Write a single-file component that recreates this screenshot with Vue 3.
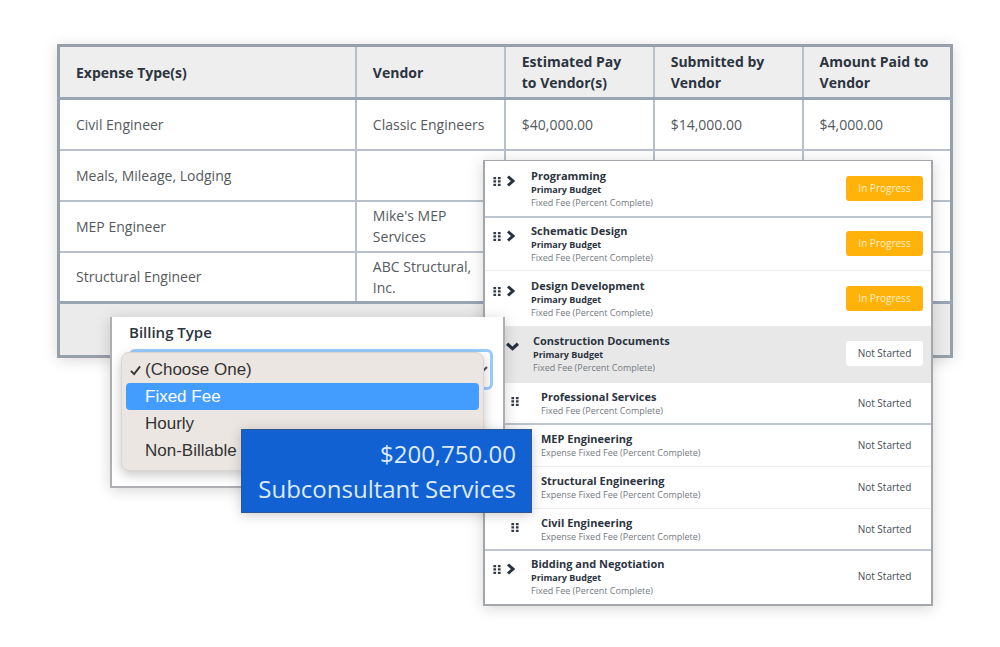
<script setup>
import { ref } from 'vue'

const headings = ['Expense Type(s)', 'Vendor', 'Estimated Pay to Vendor(s)', 'Submitted by Vendor', 'Amount Paid to Vendor']
const expenses = [
  ['Civil Engineer', 'Classic Engineers', '$40,000.00', '$14,000.00', '$4,000.00'],
  ['Meals, Mileage, Lodging', '', '', '', ''],
  ['MEP Engineer', "Mike's MEP Services", '', '', ''],
  ['Structural Engineer', 'ABC Structural, Inc.', '', '', ''],
]

const fixed = 'Fixed Fee (Percent Complete)'
const expense = 'Expense Fixed Fee (Percent Complete)'
const phases = [
  { name: 'Programming', budget: true, fee: fixed, status: 'In Progress', line: 'line' },
  { name: 'Schematic Design', budget: true, fee: fixed, status: 'In Progress', line: 'faint' },
  { name: 'Design Development', budget: true, fee: fixed, status: 'In Progress', line: 'none' },
  { name: 'Construction Documents', budget: true, open: true, fee: fixed, status: 'Not Started', line: 'none' },
  { name: 'Professional Services', fee: fixed, status: 'Not Started', line: 'line' },
  { name: 'MEP Engineering', fee: expense, status: 'Not Started', line: 'faint' },
  { name: 'Structural Engineering', fee: expense, status: 'Not Started', line: 'faint' },
  { name: 'Civil Engineering', fee: expense, status: 'Not Started', line: 'line' },
  { name: 'Bidding and Negotiation', budget: true, fee: fixed, status: 'Not Started', line: 'none' },
]

const billingTypes = ['(Choose One)', 'Fixed Fee', 'Hourly', 'Non-Billable']
const selected = ref('(Choose One)')
const active = ref('Fixed Fee')
</script>

<template>
  <main class="stage">
    <table class="expenses">
      <thead>
        <tr>
          <th v-for="h in headings" :key="h" scope="col">{{ h }}</th>
        </tr>
      </thead>
      <tbody>
        <tr v-for="row in expenses" :key="row[0]">
          <td v-for="(cell, i) in row" :key="i">{{ cell }}</td>
        </tr>
      </tbody>
      <tfoot>
        <tr><td colspan="5"></td></tr>
      </tfoot>
    </table>

    <ul class="phases">
      <li
        v-for="p in phases"
        :key="p.name"
        class="phase"
        :class="[p.line, { child: !p.budget, open: p.open }]"
      >
        <div class="tools">
          <svg v-if="!p.open" class="grip" viewBox="0 0 8 10" aria-hidden="true">
            <path d="M0 0h3v2.500H0zM5 0h3v2.500H5zM0 3.700h3v2.500H0zM5 3.700h3v2.500H5zM0 7.500h3V10H0zM5 7.500h3V10H5z" />
          </svg>
          <button v-if="p.budget" type="button" class="toggle" :aria-label="'Toggle ' + p.name" :aria-expanded="!!p.open">
            <svg v-if="p.open" class="down" viewBox="0 0 12 8" aria-hidden="true"><path d="M1 1.500l5 4.500 5-4.500" /></svg>
            <svg v-else class="right" viewBox="0 0 8 12" aria-hidden="true"><path d="M1.500 1.500l5 4.500-5 4.500" /></svg>
          </button>
        </div>
        <div class="info">
          <strong class="name">{{ p.name }}</strong>
          <strong v-if="p.budget" class="budget">Primary Budget</strong>
          <span class="fee">{{ p.fee }}</span>
        </div>
        <button type="button" class="status" :class="{ progress: p.status === 'In Progress' }">{{ p.status }}</button>
      </li>
    </ul>

    <section class="billing">
      <label for="billing-type">Billing Type</label>
      <div class="field">
        <select id="billing-type" v-model="selected">
          <option v-for="t in billingTypes" :key="t">{{ t }}</option>
        </select>
        <svg class="caret" viewBox="0 0 10 6" aria-hidden="true"><path d="M1 1l4 4 4-4" /></svg>
        <ul class="menu" role="listbox" aria-label="Billing Type">
          <li
            v-for="t in billingTypes"
            :key="t"
            role="option"
            :aria-selected="t === selected"
            :class="{ active: t === active }"
            @mouseenter="active = t"
            @click="selected = t"
          >
            <svg class="check" viewBox="0 0 12 12" aria-hidden="true"><path v-if="t === selected" d="M1 7l3.500 3.500L11 2" /></svg>
            {{ t }}
          </li>
        </ul>
      </div>
    </section>

    <aside class="total">
      <span>$200,750.00</span>
      <span>Subconsultant Services</span>
    </aside>
  </main>
</template>

<style>
body {
  background: #fff;
}
</style>

<style scoped>
* {
  box-sizing: border-box;
}
.stage {
  position: relative;
  min-height: 640px;
  padding: 44px 47px 0 57px;
  font-family: "Open Sans", "Noto Sans", sans-serif;
  color: #2b3440;
}
.expenses {
  width: 100%;
  table-layout: fixed;
  border-collapse: collapse;
  border: 3px solid #979fa8;
  background: #fff;
  box-shadow: 0 2px 14px rgba(0, 0, 0, 0.15);
  font-size: 14px;
  line-height: 21px;
}
.expenses th,
.expenses td {
  padding: 0 17px 0 16px;
  text-align: left;
  border: 2px solid #b7c0cb;
}
.expenses td {
  height: 51px;
  color: #555a60;
}
.expenses th {
  height: 53px;
  font-weight: 700;
  background: #eee;
  border-bottom: 3px solid #98a5b5;
}
.expenses th:first-child {
  width: 33.3%;
}
.expenses tfoot td {
  height: 54px;
  background: #ebebeb;
  border-top: 3px solid #98a5b5;
}
.phases {
  position: absolute;
  top: 160px;
  left: 48.3%;
  width: 45%;
  margin: 0;
  padding: 0;
  list-style: none;
  background: #fff;
  border: 2px solid #a3a7ab;
  border-top-width: 1px;
  box-shadow: 0 2px 14px rgba(0, 0, 0, 0.17);
}
.phase {
  display: flex;
  height: 55px;
  padding: 8px 8px 0;
  border-bottom: 0 solid #bcc5d0;
}
.phase.line,
.phase.open {
  height: 57px;
}
.phase.faint,
.phase:last-child {
  height: 53px;
  padding-top: 6px;
}
.phase.child {
  height: 42px;
  padding-top: 6px;
}
.phase.line {
  border-bottom-width: 2px;
}
.phase.faint {
  border-bottom: 1px solid #eceef0;
}
.phase.open {
  background: #e8e8e8;
}
.tools {
  display: flex;
  gap: 5px;
  width: 38px;
  height: 24px;
  align-items: center;
}
.child .tools {
  width: 48px;
  padding-left: 18px;
}
.open .tools {
  width: 40px;
  padding-left: 13px;
}
.grip {
  width: 8px;
  height: 9px;
  fill: #333b46;
}
.toggle {
  display: flex;
  padding: 0;
  border: 0;
  background: none;
}
.toggle svg {
  fill: none;
  stroke: #263240;
  stroke-width: 3;
}
.right {
  width: 9px;
  height: 12px;
}
.down {
  width: 13px;
  height: 9px;
}
.info {
  display: flex;
  flex: 1;
  flex-direction: column;
  white-space: nowrap;
}
.name {
  font-size: 11px;
  line-height: 14px;
}
.budget {
  font-size: 9px;
  line-height: 13px;
}
.fee {
  font-size: 9px;
  line-height: 13px;
  color: #747a82;
}
.status {
  width: 77px;
  height: 25px;
  margin-top: 7px;
  padding: 0;
  border: 0;
  border-radius: 3px;
  background: #fff;
  color: #454d57;
  font-family: inherit;
  font-size: 10px;
  line-height: 25px;
  text-align: center;
}
.status.progress {
  background: #ffb20a;
  color: #fff0c8;
}
.child .status {
  height: 24px;
  margin-top: 2px;
  line-height: 24px;
}
.child .info {
  padding-top: 1px;
}
.billing {
  position: absolute;
  top: 317px;
  left: 11%;
  width: 39.5%;
  padding: 4px 10px 96px 17px;
  background: #fff;
  border: 2px solid #adafb2;
  border-top: 0;
  box-shadow: 0 2px 14px rgba(0, 0, 0, 0.17);
}
.billing label {
  display: block;
  font-size: 15px;
  font-weight: 600;
  line-height: 22px;
}
.field {
  position: relative;
  margin-top: 6px;
}
.field select {
  display: block;
  width: 100%;
  height: 41px;
  appearance: none;
  padding: 0 16px;
  border: 3px solid #9accff;
  border-radius: 6px;
  background: #fff;
  color: #333;
  font-family: inherit;
  font-size: 15px;
}
.caret {
  position: absolute;
  right: 5px;
  top: 17px;
  width: 10px;
  height: 6px;
  fill: none;
  stroke: #4b5560;
  stroke-width: 2;
}
.menu {
  position: absolute;
  top: 3px;
  left: -8px;
  right: 9px;
  margin: 0;
  padding: 3px 4px 6px;
  list-style: none;
  background: #ece6e2;
  border: 1px solid #d9d5d2;
  border-radius: 8px;
  box-shadow: 0 4px 12px rgba(0, 0, 0, 0.22);
  color: #333;
  font-family: "Liberation Sans", sans-serif;
  font-size: 17px;
  line-height: 27px;
}
.menu li {
  display: flex;
  gap: 4px;
  align-items: center;
  height: 27px;
  padding-left: 4px;
  border-radius: 4px;
}
.menu li.active {
  background: #429dff;
  color: #fff;
}
.check {
  width: 11px;
  height: 12px;
  fill: none;
  stroke: #333;
  stroke-width: 2;
}
.total {
  position: absolute;
  top: 429px;
  left: 24.1%;
  width: 29.1%;
  display: flex;
  flex-direction: column;
  padding: 6px 15px;
  background: #1161d3;
  border: 1px solid #31578f;
  box-shadow: 0 2px 12px rgba(0, 0, 0, 0.2);
  color: #dceaff;
  font-size: 24px;
  line-height: 35px;
  text-align: right;
  white-space: nowrap;
}
</style>
